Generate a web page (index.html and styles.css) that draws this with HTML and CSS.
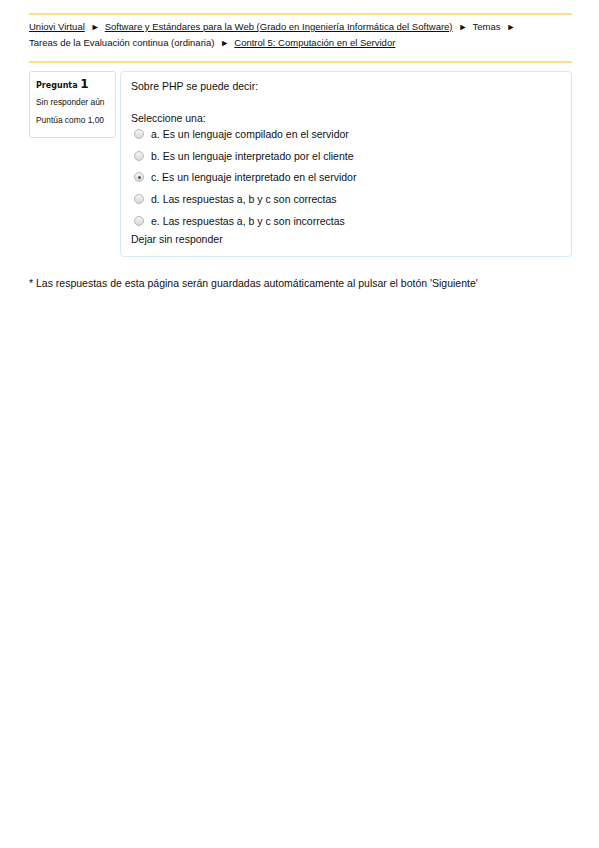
FILE: index.html
```html
<!DOCTYPE html>
<html lang="es">
<head>
<meta charset="utf-8">
<title>Control 5</title>
<link rel="stylesheet" href="styles.css">
</head>
<body>
<nav class="navbar">
  <a href="#">Uniovi Virtual</a><span class="sep">►</span><a href="#">Software y Estándares para la Web (Grado en Ingeniería Informática del Software)</a><span class="sep">►</span><span>Temas</span><span class="sep">►</span><br>
  <span>Tareas de la Evaluación continua (ordinaria)</span><span class="sep">►</span><a href="#">Control 5: Computación en el Servidor</a>
</nav>
<div class="que">
  <div class="info">
    <h3 class="no">Pregunta <span class="qno">1</span></h3>
    <div class="state">Sin responder aún</div>
    <div class="grade">Puntúa como 1,00</div>
  </div>
  <div class="content">
    <p class="qtext">Sobre PHP se puede decir:</p>
    <div class="prompt">Seleccione una:</div>
    <div class="answer">
      <label class="opt"><span class="radio"></span>a. Es un lenguaje compilado en el servidor</label>
      <label class="opt"><span class="radio"></span>b. Es un lenguaje interpretado por el cliente</label>
      <label class="opt"><span class="radio checked"></span>c. Es un lenguaje interpretado en el servidor</label>
      <label class="opt"><span class="radio"></span>d. Las respuestas a, b y c son correctas</label>
      <label class="opt"><span class="radio"></span>e. Las respuestas a, b y c son incorrectas</label>
    </div>
    <div class="clear">Dejar sin responder</div>
  </div>
</div>
<p class="note">* Las respuestas de esta página serán guardadas automáticamente al pulsar el botón 'Siguiente'</p>
</body>
</html>
```
FILE: styles.css
```css
html, body {
  margin: 0;
  background: #ffffff;
}
body {
  padding: 13px 27px 0 29px;
  font-family: "Liberation Sans", Arial, sans-serif;
  color: #111111;
  font-size: 10.5px;
}
.navbar {
  border-top: 2px solid #fee17a;
  border-bottom: 2px solid #fee17a;
  padding: 4px 0 10px 0;
  font-size: 9.5px;
  line-height: 16px;
}
.navbar a {
  color: #111111;
  text-decoration: underline;
}
.sep {
  font-size: 9px;
  margin: 0 5px 0 6px;
}
.que {
  display: flex;
  gap: 4px;
  margin-top: 8px;
  align-items: flex-start;
}
.info {
  border: 1px solid #dddddd;
  border-radius: 3px;
  padding: 4px 0 11px 6px;
  width: 79px;
}
.info h3 {
  margin: 0;
  font-family: "DejaVu Sans", Verdana, sans-serif;
  font-size: 8px;
  font-weight: bold;
  line-height: 16px;
}
.qno {
  font-size: 12px;
}
.state, .grade {
  font-size: 8.4px;
  line-height: 12px;
}
.state {
  margin-top: 2px;
}
.grade {
  margin-top: 6px;
}
.content {
  flex: 1;
  border: 1px solid #d3ebf3;
  border-radius: 4px;
  padding: 7px 10px 10px 10px;
  line-height: 14px;
}
.qtext {
  margin: 0;
}
.prompt {
  margin-top: 18px;
}
.answer {
  display: flex;
  flex-direction: column;
}
.opt {
  display: flex;
  align-items: center;
  height: 21.75px;
  padding-left: 3px;
}
.answer .opt:first-child {
  margin-top: -2px;
}
.radio {
  width: 8px;
  height: 8px;
  border: 1px solid #b9b9b9;
  border-radius: 50%;
  background: linear-gradient(#f4f4f4, #d9d9d9);
  margin-right: 7px;
  position: relative;
  flex: none;
}
.radio.checked::after {
  content: "";
  position: absolute;
  left: 2.5px;
  top: 2.5px;
  width: 3px;
  height: 3px;
  border-radius: 50%;
  background: #555555;
}
.clear {
  margin-top: 0;
}
.note {
  margin: 19px 0 0 0;
  line-height: 14px;
}
```
